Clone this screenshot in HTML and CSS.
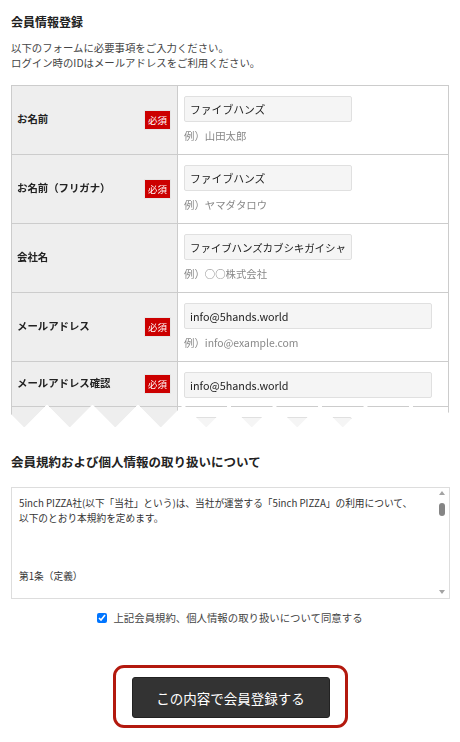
FILE: index.html
```html
<!DOCTYPE html>
<html lang="ja">
<head>
<meta charset="utf-8">
<title>会員情報登録</title>
<link rel="stylesheet" href="styles.css">
</head>
<body>
<div class="page">
  <h1 class="title">会員情報登録</h1>
  <p class="lead">以下のフォームに必要事項をご入力ください。<br>ログイン時のIDはメールアドレスをご利用ください。</p>

  <div class="form-clip">
    <div class="form">
      <div class="row">
        <div class="th"><span class="label">お名前</span><span class="req">必須</span></div>
        <div class="td"><input class="field short" type="text" value="ファイブハンズ"><p class="hint">例）山田太郎</p></div>
      </div>
      <div class="row">
        <div class="th"><span class="label">お名前（フリガナ）</span><span class="req">必須</span></div>
        <div class="td"><input class="field short" type="text" value="ファイブハンズ"><p class="hint">例）ヤマダタロウ</p></div>
      </div>
      <div class="row">
        <div class="th"><span class="label">会社名</span></div>
        <div class="td"><input class="field short tight" type="text" value="ファイブハンズカブシキガイシャ"><p class="hint">例）○○株式会社</p></div>
      </div>
      <div class="row">
        <div class="th"><span class="label">メールアドレス</span><span class="req">必須</span></div>
        <div class="td"><input class="field long" type="text" value="info@5hands.world"><p class="hint">例）info@example.com</p></div>
      </div>
      <div class="row">
        <div class="th"><span class="label">メールアドレス確認</span><span class="req">必須</span></div>
        <div class="td"><input class="field long" type="text" value="info@5hands.world"></div>
      </div>
      <div class="row row-cut">
        <div class="th"></div>
        <div class="td"><input class="field short" type="text" value="" aria-label="次の項目"></div>
      </div>
    </div>
  </div>

  <h2 class="subtitle">会員規約および個人情報の取り扱いについて</h2>

  <div class="terms">
    <div class="terms-text">
      <p>5inch PIZZA社(以下「当社」という)は、当社が運営する「5inch PIZZA」の利用について、<br>以下のとおり本規約を定めます。</p>
      <p class="article">第1条（定義）</p>
    </div>
    <div class="scrollbar">
      <span class="arrow-up"></span>
      <span class="thumb"></span>
      <span class="track"></span>
      <span class="arrow-down"></span>
    </div>
  </div>

  <label class="agree"><input type="checkbox" class="check" checked>上記会員規約、個人情報の取り扱いについて同意する</label>

  <div class="submit-area">
    <div class="highlight">
      <button type="button" class="submit">この内容で会員登録する</button>
    </div>
  </div>
</div>
</body>
</html>
```

FILE: styles.css
```css
* {
  box-sizing: border-box;
}

html, body {
  margin: 0;
  padding: 0;
  background: #fff;
}

body {
  font-family: "Noto Sans CJK JP", "Noto Sans", sans-serif;
  color: #333;
}

.page {
  padding: 14px 10px 0 11px;
}

.title {
  margin: 0;
  font-size: 12px;
  line-height: 16px;
  font-weight: bold;
  color: #222;
}

.lead {
  margin: 10px 0 0;
  font-size: 10.4px;
  line-height: 15px;
  color: #444;
}

.form-clip {
  margin-top: 15px;
  width: 438px;
  height: 342px;
  overflow: hidden;
  -webkit-mask-image: linear-gradient(#000, #000), conic-gradient(from -45deg at 50% 100%, #000 90deg, transparent 90deg);
  -webkit-mask-size: 100% calc(100% - 23px), 45.5px 23px;
  -webkit-mask-position: 0 0, 36px 100%;
  -webkit-mask-repeat: no-repeat, repeat-x;
  mask-image: linear-gradient(#000, #000), conic-gradient(from -45deg at 50% 100%, #000 90deg, transparent 90deg);
  mask-size: 100% calc(100% - 23px), 45.5px 23px;
  mask-position: 0 0, 36px 100%;
  mask-repeat: no-repeat, repeat-x;
}

.form {
  border: 1px solid #ccc;
  border-bottom: none;
}

.row {
  display: grid;
  grid-template-columns: 166px 1fr;
  border-bottom: 1px solid #ccc;
}

.row-cut {
  height: 68px;
}

.th {
  background: #eee;
  border-right: 1px solid #ccc;
  display: flex;
  align-items: center;
  justify-content: space-between;
  padding: 0 6px 0 5px;
}

.label {
  font-size: 10.4px;
  line-height: 14px;
  font-weight: bold;
  color: #222;
  margin-top: -3px;
}

.req {
  display: block;
  width: 27px;
  height: 20px;
  line-height: 18px;
  text-align: center;
  background: #cc0000;
  border: 1px solid #e6e6e6;
  color: #fff;
  font-size: 9.5px;
}

.td {
  padding: 10px 6px 8px 6px;
}

.field {
  display: block;
  height: 26px;
  margin: 0;
  padding: 0 2px 0 5px;
  background: #f5f5f5;
  border: 1px solid #e0e0e0;
  border-radius: 2px;
  font-family: "Noto Sans CJK JP", "Noto Sans", sans-serif;
  font-size: 10.8px;
  color: #222;
  outline: none;
}

.field.tight {
  font-size: 10.5px;
  letter-spacing: -0.1px;
}

.field.short {
  width: 168px;
}

.field.long {
  width: 248px;
}

.hint {
  margin: 5px 0 1px;
  font-size: 10.4px;
  line-height: 18px;
  color: #888;
}

.subtitle {
  margin: 26px 0 0;
  font-size: 12.5px;
  line-height: 18px;
  font-weight: bold;
  color: #222;
}

.terms {
  margin-top: 16px;
  width: 439px;
  height: 112px;
  border: 1px solid #ddd;
  display: flex;
  overflow: hidden;
}

.terms-text {
  flex: 1;
  padding: 8px 8px 0 7px;
  font-size: 9.7px;
  line-height: 14.7px;
  color: #333;
}

.terms-text p {
  margin: 0;
}

.terms-text .article {
  margin-top: 44px;
}

.scrollbar {
  width: 14px;
  display: flex;
  flex-direction: column;
  align-items: center;
  padding: 3px 0 4px;
}

.arrow-up {
  width: 0;
  height: 0;
  border-left: 3.5px solid transparent;
  border-right: 3.5px solid transparent;
  border-bottom: 4px solid #a3a3a3;
}

.arrow-down {
  width: 0;
  height: 0;
  border-left: 3.5px solid transparent;
  border-right: 3.5px solid transparent;
  border-top: 4px solid #a3a3a3;
}

.thumb {
  margin-top: 8px;
  width: 6px;
  height: 13px;
  border-radius: 3px;
  background: #858585;
}

.track {
  flex: 1;
}

.agree {
  display: flex;
  align-items: center;
  justify-content: center;
  margin: 11px 0 0 -11px;
  width: 460px;
  font-size: 10.4px;
  line-height: 16px;
  color: #444;
}

.check {
  width: 10px;
  height: 10px;
  margin: 0 6px 0 0;
  accent-color: #0075ff;
}

.submit-area {
  display: flex;
  justify-content: center;
  margin: 39px 0 0 -11px;
  width: 460px;
}

.highlight {
  border: 3px solid #b3190e;
  border-radius: 11px;
  padding: 9px 15px 7px 16px;
}

.submit {
  display: block;
  width: 198px;
  height: 41px;
  background: #333;
  border: 1px solid #222;
  border-radius: 3px;
  color: #fff;
  font-family: "Noto Sans CJK JP", "Noto Sans", sans-serif;
  font-size: 13.5px;
  padding: 0;
}
```
